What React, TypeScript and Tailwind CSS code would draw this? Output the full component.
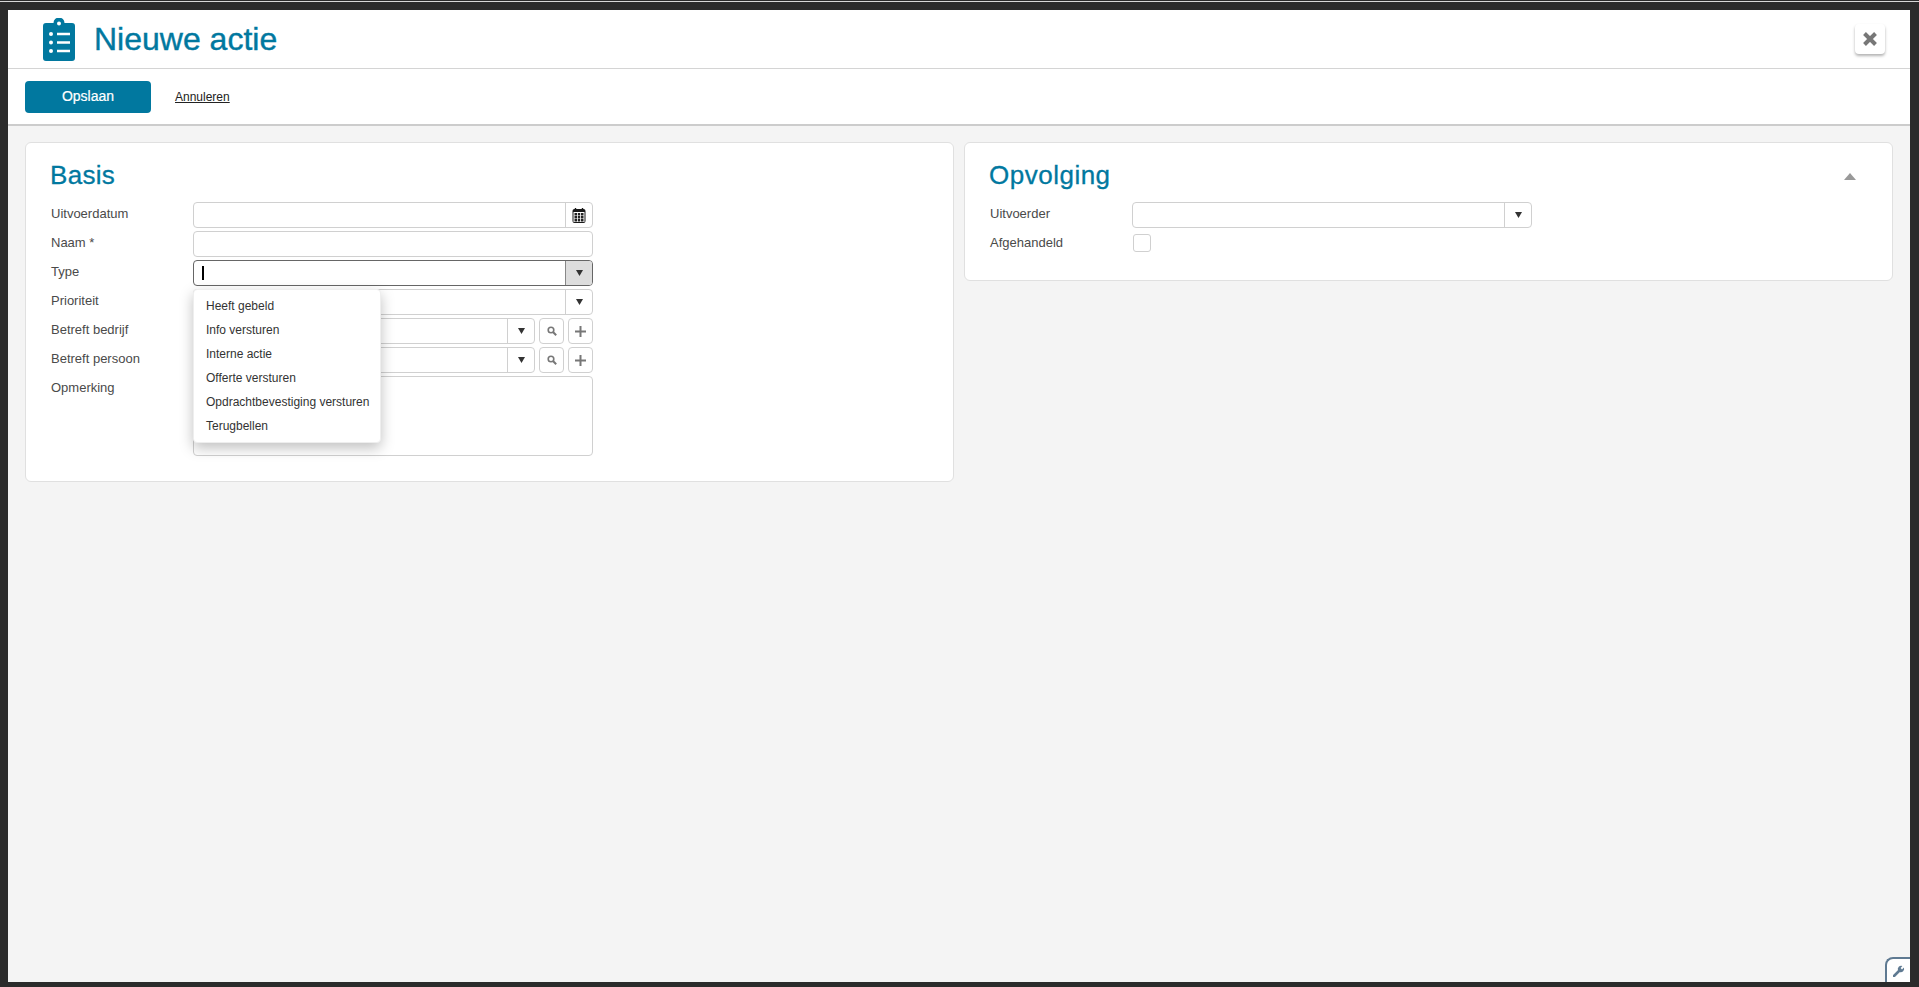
import type { ReactNode } from 'react';

const items = [
  'Heeft gebeld',
  'Info versturen',
  'Interne actie',
  'Offerte versturen',
  'Opdrachtbevestiging versturen',
  'Terugbellen',
];

function Arrow() {
  return (
    <svg width="7" height="6" viewBox="0 0 7 6">
      <path d="M0 0h7L3.500 6z" fill="#333" />
    </svg>
  );
}

function Row({ label, children }: { label: string; children: ReactNode }) {
  return (
    <div className="flex items-start mb-[3px]">
      <label className="w-[142px] h-[24px] leading-[24px] text-[13px] text-[#4a4a4a] shrink-0">{label}</label>
      {children}
    </div>
  );
}

function Field({ width = 'w-[400px]', children }: { width?: string; children?: ReactNode }) {
  return (
    <div className={`${width} h-[26px] flex border border-[#d0d0d0] rounded-[4px] bg-white shrink-0`}>
      <input readOnly className="flex-1 min-w-0 outline-none bg-transparent" />
      {children}
    </div>
  );
}

function AddOn({ children, width = 'w-[27px]' }: { children: ReactNode; width?: string }) {
  return (
    <div className={`${width} border-l border-[#d0d0d0] flex items-center justify-center shrink-0`}>{children}</div>
  );
}

function IconButton({ children }: { children: ReactNode }) {
  return (
    <button className="w-[25px] h-[26px] ml-[4px] border border-[#d0d0d0] rounded-[4px] bg-white flex items-center justify-center shrink-0">
      {children}
    </button>
  );
}

function SearchIcon() {
  return (
    <svg width="10" height="10" viewBox="0 0 10 10" fill="none" stroke="#777">
      <circle cx="4" cy="4" r="2.8" strokeWidth="1.6" />
      <path d="M6 6l3.200 3.200" strokeWidth="2" />
    </svg>
  );
}

function PlusIcon() {
  return (
    <svg width="11" height="11" viewBox="0 0 11 11" stroke="#777" strokeWidth="2">
      <path d="M5.500 0v11M0 5.500h11" />
    </svg>
  );
}

function CalendarIcon() {
  return (
    <svg width="14" height="15" viewBox="0 0 14 15">
      <rect x="0.5" y="1" width="13" height="14" rx="2" fill="#1a1a1a" />
      <rect x="1.5" y="4" width="11" height="10" fill="#fff" />
      <path d="M3.500 0v3M10.500 0v3" stroke="#1a1a1a" strokeWidth="1.4" />
      <path
        d="M2.500 5h2.500v2.500H2.500zM5.800 5h2.400v2.500H5.800zM9 5h2.500v2.500H9zM2.500 8h2.500v2.500H2.500zM5.800 8h2.400v2.500H5.800zM9 8h2.500v2.500H9zM2.500 11h2.500v2.500H2.500zM5.800 11h2.400v2.500H5.800zM9 11h2.500v2.500H9z"
        fill="#222"
      />
    </svg>
  );
}

export default function App() {
  return (
    <div className="w-full h-[987px] bg-[#2b2b2b] flex flex-col font-['Liberation_Sans',Arial,sans-serif] overflow-hidden">
      <div className="h-px mt-px bg-[#d8d8d8] shrink-0" />
      <div className="flex-1 min-h-0 mt-[8px] mb-[5px] ml-[8px] mr-[9px] bg-[#f4f4f4] flex flex-col relative">
        <header className="h-[59px] bg-white border-b border-[#d4d4d4] flex items-center pl-[35px] pr-[25px] shrink-0">
          <svg width="32" height="43" viewBox="0 0 32 43" className="mt-[1px]">
            <path
              d="M3 5h7.500a5.500 5.500 0 0 1 11 0H29a3 3 0 0 1 3 3v32a3 3 0 0 1-3 3H3a3 3 0 0 1-3-3V8a3 3 0 0 1 3-3z"
              fill="#01789f"
            />
            <circle cx="16" cy="5.5" r="2" fill="#fff" />
            <circle cx="8" cy="16" r="2" fill="#fff" />
            <circle cx="8" cy="24.5" r="2" fill="#fff" />
            <circle cx="8" cy="33" r="2" fill="#fff" />
            <path d="M14 16h13M14 24.500h13M14 33h13" stroke="#fff" strokeWidth="2.4" />
          </svg>
          <h1 className="ml-[19px] text-[32px] leading-none text-[#01789f] [-webkit-text-stroke:0.4px_#01789f]">Nieuwe actie</h1>
          <button className="ml-auto w-[30px] h-[30px] bg-white rounded-[4px] shadow-[0_2px_3px_rgba(0,0,0,0.3)] flex items-center justify-center">
            <svg width="14" height="14" viewBox="0 0 14 14" stroke="#777" strokeWidth="4">
              <path d="M1.500 1.500l11 11M12.500 1.500l-11 11" />
            </svg>
          </button>
        </header>

        <div className="h-[57px] bg-white border-b-2 border-[#cccccc] flex items-center pl-[17px] shrink-0">
          <button className="w-[126px] h-[32px] bg-[#01789f] text-white text-[14px] rounded-[4px] [-webkit-text-stroke:0.2px_#ffffff]">Opslaan</button>
          <a className="ml-[24px] text-[12px] text-[#222] underline">Annuleren</a>
        </div>

        <main className="grid grid-cols-2 gap-[10px] items-start px-[17px] pt-[16px]">
          <section className="h-[340px] bg-white border border-[#e0e0e0] rounded-[6px] pl-[25px]">
            <h2 className="h-[59px] pt-[17px] -ml-px text-[26px] leading-[30px] tracking-[0.3px] text-[#01789f] [-webkit-text-stroke:0.3px_#01789f]">Basis</h2>
            <Row label="Uitvoerdatum">
              <Field>
                <AddOn>
                  <CalendarIcon />
                </AddOn>
              </Field>
            </Row>
            <Row label="Naam *">
              <Field />
            </Row>
            <Row label="Type">
              <div className="relative">
                <div className="w-[400px] h-[26px] flex border border-[#666] rounded-[4px] bg-white">
                  <div className="flex-1 flex items-center pl-[8px]">
                    <div className="w-[2px] h-[14px] bg-black" />
                  </div>
                  <div className="w-[27px] border-l border-[#888] bg-[#dddddd] rounded-r-[3px] flex items-center justify-center">
                    <Arrow />
                  </div>
                </div>
                <ul className="absolute left-0 top-[29px] w-[188px] h-[154px] z-10 bg-white rounded-[4px] border border-[#eeeeee] shadow-[0_5px_14px_rgba(0,0,0,0.25)] pt-[4px] pl-[12px]">
                  {items.map((item) => (
                    <li key={item} className="h-[24px] leading-[24px] text-[12px] text-[#333] whitespace-nowrap">
                      {item}
                    </li>
                  ))}
                </ul>
              </div>
            </Row>
            <Row label="Prioriteit">
              <Field>
                <AddOn>
                  <Arrow />
                </AddOn>
              </Field>
            </Row>
            <Row label="Betreft bedrijf">
              <Field width="w-[342px]">
                <AddOn>
                  <Arrow />
                </AddOn>
              </Field>
              <IconButton>
                <SearchIcon />
              </IconButton>
              <IconButton>
                <PlusIcon />
              </IconButton>
            </Row>
            <Row label="Betreft persoon">
              <Field width="w-[342px]">
                <AddOn>
                  <Arrow />
                </AddOn>
              </Field>
              <IconButton>
                <SearchIcon />
              </IconButton>
              <IconButton>
                <PlusIcon />
              </IconButton>
            </Row>
            <Row label="Opmerking">
              <textarea readOnly className="w-[400px] h-[80px] border border-[#d0d0d0] rounded-[4px] bg-white outline-none resize-none" />
            </Row>
          </section>

          <section className="h-[139px] bg-white border border-[#e0e0e0] rounded-[6px] pl-[25px]">
            <div className="flex items-start justify-between pr-[36px]">
              <h2 className="h-[59px] pt-[17px] -ml-px text-[26px] leading-[30px] tracking-[0.5px] text-[#01789f] [-webkit-text-stroke:0.3px_#01789f]">Opvolging</h2>
              <svg width="12" height="7" viewBox="0 0 12 7" className="mt-[30px]">
                <path d="M0 7h12L6 0z" fill="#999" />
              </svg>
            </div>
            <Row label="Uitvoerder">
              <Field>
                <AddOn>
                  <Arrow />
                </AddOn>
              </Field>
            </Row>
            <Row label="Afgehandeld">
              <div className="w-[18px] h-[18px] mt-[3px] ml-px border border-[#d0d0d0] rounded-[3px] bg-white" />
            </Row>
          </section>
        </main>

        <div className="absolute right-0 bottom-0 w-[25px] h-[25px] bg-white border-t-2 border-l-2 border-[#5f7a92] rounded-tl-[8px] flex items-center justify-center">
          <svg width="12" height="12" viewBox="0 0 12 12">
            <path d="M1 11l5-5" stroke="#5f7a92" strokeWidth="2.6" strokeLinecap="round" />
            <path d="M5 5.500a3.400 3.400 0 0 1 4.400-4.400L7.600 3l1.400 1.400 1.900-1.800A3.400 3.400 0 0 1 6.500 7z" fill="#5f7a92" />
          </svg>
        </div>
      </div>
    </div>
  );
}
